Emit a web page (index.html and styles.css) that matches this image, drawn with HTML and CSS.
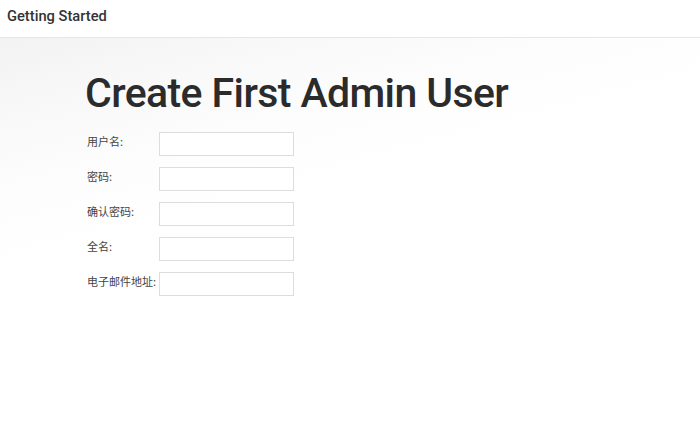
FILE: index.html
```html
<!DOCTYPE html>
<html>
<head>
<meta charset="utf-8">
<link rel="stylesheet" href="styles.css">
</head>
<body>
<header class="topbar"><span class="brand">Getting Started</span></header>
<main class="content">
  <h1 class="title">Create First Admin User</h1>
  <form class="form">
    <div class="row"><label class="label">用户名:</label><input class="field" type="text"></div>
    <div class="row"><label class="label">密码:</label><input class="field" type="password"></div>
    <div class="row"><label class="label">确认密码:</label><input class="field" type="password"></div>
    <div class="row"><label class="label">全名:</label><input class="field" type="text"></div>
    <div class="row"><label class="label">电子邮件地址:</label><input class="field" type="text"></div>
  </form>
</main>
</body>
</html>
```
FILE: styles.css
```css
html, body {
  margin: 0;
  padding: 0;
  height: 100%;
}
body {
  font-family: Roboto, "Noto Sans CJK SC", sans-serif;
  color: #333;
  background: linear-gradient(165deg, #efefef 0%, #f8f8f8 18%, #fdfdfd 32%, #ffffff 45%);
  overflow: hidden;
}
.topbar {
  background: #fff;
  border-bottom: 1px solid #e6e6e6;
  display: flex;
  align-items: center;
  padding-left: 7px;
  box-sizing: border-box;
  height: 38px;
}
.brand {
  font-size: 14.7px;
  font-weight: 500;
  color: #333;
  margin-top: -6px;
}
.content {
  padding-left: 85px;
  padding-top: 30px;
}
.title {
  margin: 0;
  font-size: 41px;
  font-weight: 500;
  line-height: 50px;
  color: #2b2b2b;
  letter-spacing: -0.6px;
}
.form {
  margin-top: 14px;
  display: flex;
  flex-direction: column;
  gap: 11px;
}
.row {
  display: flex;
  align-items: flex-start;
}
.label {
  width: 72px;
  padding-left: 2px;
  font-size: 11px;
  line-height: 14px;
  padding-top: 2px;
  color: #444;
  font-family: "Noto Sans CJK SC", sans-serif;
}
.field {
  width: 135px;
  height: 24px;
  box-sizing: border-box;
  border: 1px solid #ddd;
  background: #fff;
  margin: 0;
  padding: 0;
}
```
